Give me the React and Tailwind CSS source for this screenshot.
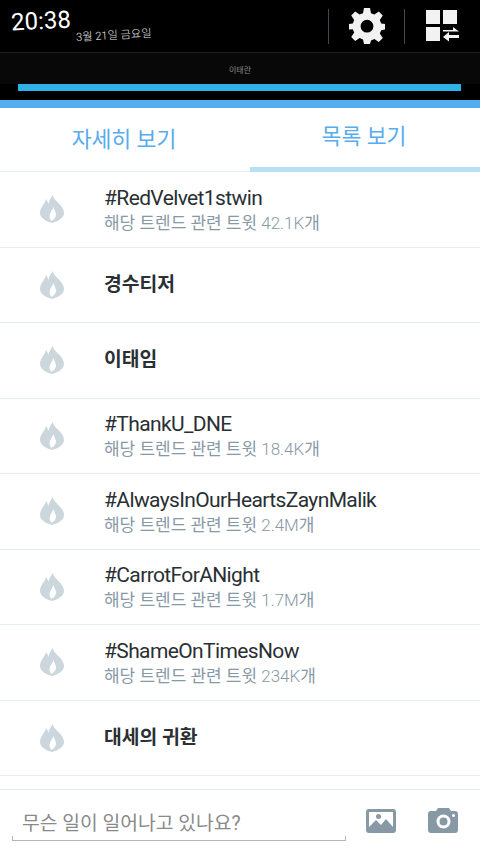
const trends = [
  { name: '#RedVelvet1stwin', count: '42.1K' },
  { name: '경수티저' },
  { name: '이태임' },
  { name: '#ThankU_DNE', count: '18.4K' },
  { name: '#AlwaysInOurHeartsZaynMalik', count: '2.4M' },
  { name: '#CarrotForANight', count: '1.7M' },
  { name: '#ShameOnTimesNow', count: '234K' },
  { name: '대세의 귀환' },
];

const Flame = () => (
  <svg width="24" height="28" viewBox="0 0 24 28" className="text-[#ccd6dd]">
    <path
      fill="currentColor"
      fillRule="evenodd"
      d="M12.700 0C13.500 6 24 10 24 18 24 23 18 26.500 12 28 6 26.500 0 23 0 18 0 12 5 9 6 4 7.500 6 8 7.500 8.500 9 9 5 11 3 12.700 0ZM13.500 12C12.500 15 9.500 18 9.500 21 9.500 23 10.500 25 11.500 26 13 25 16 23 16 19.500 16 17 14 14.500 13.500 12Z"
    />
  </svg>
);

const TrendRow = ({ name, count }) => (
  <div className="h-[75.5px] flex items-center border-b border-[#e6ecf0] shrink-0">
    <div className="w-[104px] flex justify-center shrink-0">
      <Flame />
    </div>
    {count ? (
      <div className="flex flex-col pt-[1px]">
        <div className="text-[21px] leading-[26px] text-[#292f33] tracking-[-0.62px]">{name}</div>
        <div className="text-[17px] leading-[24px] text-[#8899a6] tracking-[-0.03px]">
          해당 트렌드 관련 트윗 <span className="font-light">{count}</span>개
        </div>
      </div>
    ) : (
      <div className="text-[19.3px] font-bold text-[#292f33] pt-[1px]">{name}</div>
    )}
  </div>
);

export default function App() {
  return (
    <div className="w-[480px] h-[853px] overflow-hidden flex flex-col bg-white font-['Roboto','Noto_Sans_CJK_KR',sans-serif]">
      {/* 상단 위젯 */}
      <div className="bg-black h-[100px] shrink-0 flex flex-col">
        <div className="h-[53px] border-b border-[#1c2026] flex items-center shrink-0">
          <div className="flex-1 pl-[11px] flex items-start text-white">
            <span className="text-[24px] leading-none -rotate-3 -mt-[2px]">20:38</span>
            <span className="text-[11.200px] font-light leading-none text-[#e8e8e8] ml-[5px] mt-[19px] -rotate-3">3월 21일 금요일</span>
          </div>
          <div className="w-px h-[35px] bg-[#44484c]" />
          <div className="w-[75px] flex justify-center">
            <svg width="36" height="36" viewBox="0 0 36 36">
              <path
                fill="#f2f2f2"
                fillRule="evenodd"
                d="M15 0h6l1 5.200 3.400 1.400L29.800 3.600l4 4-3 4.400L32.200 15.400 36 16v5.400l-3.800.800-1.400 3.400 3 4.400-4 4-4.400-3-3.400 1.400L21 36h-6l-1-4.600-3.400-1.400-4.400 3-4-4 3-4.400-1.400-3.400L0 21.400V16l3.800-.600L5.200 12 2.200 7.600l4-4 4.400 3L14 5.200ZM18 11.800a6.400 6.400 0 1 0 0 12.800 6.400 6.400 0 0 0 0-12.800Z"
              />
            </svg>
          </div>
          <div className="w-px h-[35px] bg-[#44484c]" />
          <div className="w-[75px] flex justify-center">
            <svg width="34" height="32" viewBox="0 0 34 32" fill="#f2f2f2">
              <rect x="0" y="0" width="14" height="14" />
              <rect x="17" y="0" width="14" height="14" />
              <rect x="0" y="17" width="14" height="14" />
              <path d="M17 20h10v-3l6 4.500H17ZM33 25H23v-3l-6 5h0 0l6 4.500V28h10Z" />
            </svg>
          </div>
        </div>
        <div className="bg-[#080808] h-[31px] flex justify-center pt-[13px] shrink-0">
          <span className="text-[8px] leading-[10px] text-[#888]">이태란</span>
        </div>
        <div className="pl-[18px] pr-[19px] shrink-0">
          <div className="h-[7px] bg-[#2fb0e6]" />
        </div>
      </div>
      <div className="h-[8px] bg-[#55acee] shrink-0" />

      {/* 탭 */}
      <div className="h-[64px] flex border-b border-[#e6ecf0] shrink-0">
        <div className="w-[250px] flex items-center justify-center pt-[1px] pr-[2px] text-[21.600px] text-[#55acee]">자세히 보기</div>
        <div className="w-[230px] flex items-center justify-center pb-[1px] pr-[2px] text-[21.600px] text-[#55acee] border-b-[5px] border-[#b9dff7] -mb-px">목록 보기</div>
      </div>

      <div className="h-[618px] overflow-hidden flex flex-col shrink-0">
        {trends.map((t) => (
          <TrendRow key={t.name} {...t} />
        ))}
        <div className="h-[14px] border-b border-[#e6ecf0] shrink-0" />
      </div>

      {/* 입력창 */}
      <div className="flex-1 flex items-start pl-[12px]">
        <div className="w-[334px] h-[42px] mt-[9px] border-b border-l border-r border-[#b5b5b5] relative">
          <div className="absolute inset-x-[-1px] top-0 bottom-[4px] bg-white" />
          <div className="relative pl-[9px] pt-[12px] text-[19.300px] leading-[25px] text-[#8a8a8a]">무슨 일이 일어나고 있나요?</div>
        </div>
        <div className="ml-[20px] mt-[19px]">
          <svg width="30" height="24" viewBox="0 0 30 24">
            <path fill="#8899a6" fillRule="evenodd" d="M3 0h24a3 3 0 0 1 3 3v18a3 3 0 0 1-3 3H3a3 3 0 0 1-3-3V3a3 3 0 0 1 3-3Zm0 3v15l7-7 5 5 5-6 7 8V3Zm9.500 2a2.500 2.500 0 1 1 0 5 2.500 2.500 0 0 1 0-5Z" />
          </svg>
        </div>
        <div className="ml-[32px] mt-[18px]">
          <svg width="30" height="25" viewBox="0 0 30 25">
            <path fill="#8899a6" fillRule="evenodd" d="M3 3h5l2-3h11l2 3h4a3 3 0 0 1 3 3v16a3 3 0 0 1-3 3H3a3 3 0 0 1-3-3V6a3 3 0 0 1 3-3Zm12.500 3.500a7 7 0 1 0 0 14 7 7 0 0 0 0-14Zm0 3a4 4 0 1 1 0 8 4 4 0 0 1 0-8ZM25.500 6a1.500 1.500 0 1 0 0 3 1.500 1.500 0 0 0 0-3Z" />
          </svg>
        </div>
      </div>
    </div>
  );
}
